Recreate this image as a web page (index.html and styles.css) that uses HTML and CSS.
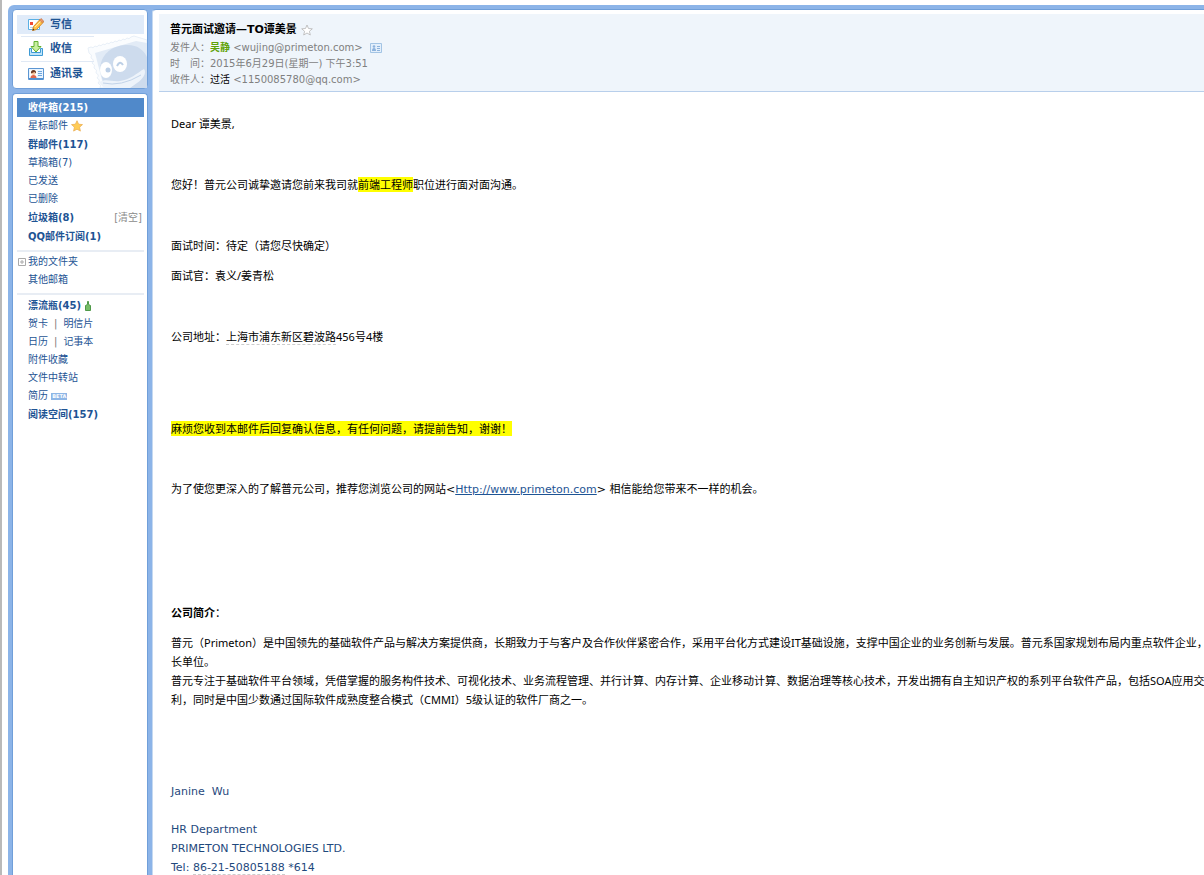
FILE: index.html
```html
<!DOCTYPE html>
<html lang="zh-CN">
<head>
<meta charset="utf-8">
<title>QQ邮箱</title>
<link rel="stylesheet" href="styles.css">
</head>
<body>
<div class="frame">
  <aside class="sidebar">
    <nav class="card actions">
      <svg class="mascot" viewBox="0 0 60 53" aria-hidden="true">
        <path d="M1 13 L4 12 Q6 14 8 11 Q10 13 12 10 Q14 12 16 9 Q18 11 20 8 Q22 10 24 7 Q26 9 28 6 Q30 8 32 5 Q34 7 36 4 Q38 6 40 3 Q42 5 44 2 L47 1 L60 5 V53 H13 Q15 50 11 48 Q14 45 10 43 Q13 40 9 38 Q11 35 7 33 Q9 30 5 28 Q8 25 4 23 Q6 20 2 18Z" fill="#fafcfe" stroke="#e9f0f8"/>
        <path d="M8 18 L49 6 L60 8 V53 H17Z" fill="#e2ebf6"/>
        <path d="M13 36 C13 20 24 11 38 10 C50 9 57 15 60 22 V53 H18Z" fill="#cddbed"/>
        <path d="M12 47 C20 43 24 47 33 46 C43 45 50 38 57 34 C60 38 56 44 50 48 L43 53 H17Z" fill="#edf3fa"/>
        <path d="M16 48 Q34 52 54 40" fill="none" stroke="#c3d4e9"/>
        <ellipse cx="19" cy="35" rx="6" ry="8" fill="#fff"/><ellipse cx="33" cy="29" rx="7" ry="8" fill="#fff"/>
        <circle cx="21" cy="35" r="2.500" fill="#bccfe6"/><path d="M30 31q3-6 6-1" fill="none" stroke="#bccfe6" stroke-width="2"/>
      </svg>
      <a class="action current" href="#compose">
        <svg viewBox="0 0 16 16" aria-hidden="true"><path d="M.5 2.500h11v10H.5z" fill="#fff" stroke="#5bb0e4"/><path d="M2 5h3v3H2z" fill="#f04a35"/><path d="M2 10.500h4" stroke="#b9d6ef"/><path d="M4.500 13.500l1-4 7-7.500 3 3-7 7.500z" fill="#ffc54a" stroke="#d78a2a"/><path d="M7 10l6-6" stroke="#ffe9a8"/><path d="M11.500 3l1.500-1.500 2.700 2.500-1.500 1.600z" fill="#ef9c6a" stroke="#b9633a" stroke-width=".6"/><path d="M4.500 13.500l.6-2 1.400 1.500z" fill="#333"/></svg>写信</a>
      <a class="action" href="#receive">
        <svg viewBox="0 0 16 16" aria-hidden="true"><path d="M1.500 7.500v7h13v-7h-2v4h-9v-4z" fill="#bfe4fa" stroke="#3d9ad4"/><path d="M6 .5h4v5h3L8 11 3 5.500h3z" fill="#c9efa0" stroke="#62b030"/></svg>收信</a>
      <a class="action" href="#contacts">
        <svg viewBox="0 0 16 16" aria-hidden="true"><path d="M.5 2.500h15v11H.5z" fill="#e9f4ff" stroke="#5c96d2"/><path d="M1 12h14v1.500H1z" fill="#4f8fd0"/><path d="M2 4h7v8H2z" fill="#fff"/><circle cx="5.500" cy="7" r="2" fill="#f9c39a"/><path d="M3 7.500q-.5-3.500 2.500-3.500 3 0 2.500 3.500L6.500 6z" fill="#6e3a22"/><path d="M2.500 12q0-3 3-3t3 3z" fill="#e0664c"/><path d="M10 5.500h4M10 7.500h4M10 9.500h4" stroke="#6ea5dc"/></svg>通讯录</a>
    </nav>
    <nav class="card folders">
      <ul class="group">
        <li class="unread"><a class="selected" href="#inbox">收件箱(215)</a></li>
        <li><a href="#star">星标邮件 <svg class="star" viewBox="0 0 12 12" aria-hidden="true"><path d="M6 .7l1.600 3.500 3.900.4-2.900 2.600.8 3.900L6 9.200l-3.400 1.900.8-3.900L.5 4.600l3.900-.4z" fill="#ffcc55" stroke="#e9a94a" stroke-width=".7"/></svg></a></li>
        <li class="unread"><a href="#group">群邮件(117)</a></li>
        <li><a href="#draft">草稿箱(7)</a></li>
        <li><a href="#sent">已发送</a></li>
        <li><a href="#deleted">已删除</a></li>
        <li class="unread split"><a href="#junk">垃圾箱(8)</a><a class="clear" href="#clear">[清空]</a></li>
        <li class="unread"><a href="#subscribe">QQ邮件订阅(1)</a></li>
      </ul>
      <ul class="group">
        <li class="tree"><svg class="plus" viewBox="0 0 8 8" aria-hidden="true"><path d="M.5.5h7v7h-7zM2 4h4M4 2v4" fill="none" stroke="#aaa"/></svg><a href="#folders">我的文件夹</a></li>
        <li><a href="#other">其他邮箱</a></li>
      </ul>
      <ul class="group">
        <li class="unread"><a href="#bottle">漂流瓶(45) <svg class="bottle" viewBox="0 0 6 10" aria-hidden="true"><path d="M2.500.5h1v3l2 1v5h-5v-5l2-1z" fill="#76bd67" stroke="#4f9948"/></svg></a></li>
        <li><a href="#card">贺卡</a><span class="bar">|</span><a href="#postcard">明信片</a></li>
        <li><a href="#calendar">日历</a><span class="bar">|</span><a href="#notes">记事本</a></li>
        <li><a href="#attach">附件收藏</a></li>
        <li><a href="#transfer">文件中转站</a></li>
        <li><a href="#resume">简历 <span class="beta">BETA</span></a></li>
        <li class="unread"><a href="#reading">阅读空间(157)</a></li>
      </ul>
    </nav>
  </aside>
  <main class="mail">
    <header class="head">
      <h1 class="subject">普元面试邀请—TO谭美景 <svg class="flag" viewBox="0 0 12 12" aria-hidden="true"><path d="M6 1l1.500 3.500 3.800.3-2.900 2.500.9 3.700L6 9l-3.300 2 .9-3.700L.7 4.800l3.800-.3z" fill="#fff" stroke="#b5b5b5" stroke-width=".8"/></svg></h1>
      <p class="meta">发件人：<b class="sender">吴静</b> &lt;wujing@primeton.com&gt; <svg class="vcard" viewBox="0 0 12 10" aria-hidden="true"><path d="M.5.5h11v9H.5z" fill="#e3effb" stroke="#a3c4e4"/><circle cx="4" cy="3.500" r="1.300" fill="#8cb2dc"/><path d="M2 8q0-3 2-3t2 3zM7 3h3v1H7zM7 5h3v1H7zM7 7h3v1H7z" fill="#8cb2dc"/></svg></p>
      <p class="meta">时&emsp;间：2015年6月29日(星期一) 下午3:51</p>
      <p class="meta">收件人：<span class="receiver">过活</span> &lt;1150085780@qq.com&gt;</p>
    </header>
    <article class="body">
      <p>Dear 谭美景,</p>
      <p class="blank">&nbsp;</p>
      <p>您好！普元公司诚挚邀请您前来我司就<mark>前端工程师</mark>职位进行面对面沟通。</p>
      <p class="blank">&nbsp;</p>
      <p>面试时间：待定（请您尽快确定）</p>
      <p>面试官：袁义/姜青松</p>
      <p class="blank">&nbsp;</p>
      <p>公司地址：<span class="place">上海市浦东新区碧波路</span>456号4楼</p>
      <p class="blank">&nbsp;</p>
      <p class="blank">&nbsp;</p>
      <p><mark>麻烦您收到本邮件后回复确认信息，有任何问题，请提前告知，谢谢！</mark></p>
      <p class="blank">&nbsp;</p>
      <p class="wide">为了使您更深入的了解普元公司，推荐您浏览公司的网站&lt;<a href="#site">Http://www.primeton.com</a>&gt; 相信能给您带来不一样的机会。</p>
      <p class="blank">&nbsp;</p>
      <p class="blank">&nbsp;</p>
      <p class="blank">&nbsp;</p>
      <p><b>公司简介</b>：</p>
      <div class="intro">普元（Primeton）是中国领先的基础软件产品与解决方案提供商，长期致力于与客户及合作伙伴紧密合作，采用平台化方式建设IT基础设施，支撑中国企业的业务创新与发展。普元系国家规划布局内重点软件企业，并是国际<br>长单位。<br>普元专注于基础软件平台领域，凭借掌握的服务构件技术、可视化技术、业务流程管理、并行计算、内存计算、企业移动计算、数据治理等核心技术，开发出拥有自主知识产权的系列平台软件产品，包括SOA应用交付平台、<br>利，同时是中国少数通过国际软件成熟度整合模式（CMMI）5级认证的软件厂商之一。</div>
      <address class="sign">Janine&nbsp; Wu<br><br>HR Department<br>PRIMETON TECHNOLOGIES LTD.<br>Tel: <span class="place">86-21-50805188</span> *614</address>
    </article>
  </main>
</div>
</body>
</html>
```
FILE: styles.css
```css
* { box-sizing: border-box; }
html { height: 100%; }
body {
  height: 100%;
  margin: 0;
  padding: 5px 0 0 6px;
  border-left: 2px solid #b9b9b9;
  overflow: hidden;
  background: #fff;
  font: 10px/18px "DejaVu Sans", "Noto Sans CJK SC", sans-serif;
}
a { color: #1e5494; text-decoration: none; }
ul, p, h1 { margin: 0; padding: 0; list-style: none; }
.frame {
  display: flex;
  gap: 4px;
  height: 100%;
  padding: 4px 0 0 4px;
  background: #8cb4e8;
  border-top-left-radius: 6px;
}
.sidebar { display: flex; flex-direction: column; gap: 4px; width: 136px; flex: none; }
.card { padding: 4px 3px 4px 4px; background: #fff; border: 1px solid #709fd9; border-radius: 4px; white-space: nowrap; }
.actions { position: relative; height: 80px; padding-top: 5px; }
.mascot { position: absolute; right: 0; bottom: 0; width: 60px; height: 53px; }
.action {
  position: relative;
  display: flex;
  align-items: center;
  gap: 6px;
  height: 25px;
  padding-left: 11px;
  font-size: 11px;
  font-weight: bold;
}
.action svg { width: 16px; height: 16px; }
.action.current { height: 19px; background: #e0ebf9; }
.action + .action::before { content: ""; position: absolute; top: 0; left: 4px; right: 50px; border-top: 1px solid #e0e9f5; }
.action.current + .action { margin-top: 2px; }
.folders { flex: 1; border-bottom: 0; border-radius: 4px 4px 0 0; }
.group + .group { margin-top: 4px; padding-top: 1px; border-top: 2px solid #e8edf4; }
.group li { height: 18px; padding-left: 11px; line-height: 18px; }
.group .unread { height: 19px; line-height: 19px; font-weight: bold; }
.selected { display: block; margin-left: -11px; padding-left: 11px; background: #5089ca; color: #fff; }
.split { display: flex; justify-content: space-between; padding-right: 2px; }
.clear { color: #8c8c8c; font-weight: normal; }
.group .tree { display: flex; align-items: center; gap: 2px; padding-left: 1px; }
.plus { width: 8px; height: 8px; }
.star { width: 12px; height: 12px; vertical-align: middle; }
.bottle { width: 6px; height: 10px; vertical-align: middle; }
.beta {
  display: inline-block;
  padding: 0 1px;
  background: #8eb6e6;
  color: #fff;
  font: bold 5px/7px "DejaVu Sans", sans-serif;
  vertical-align: middle;
}
.bar { margin: 0 6px; color: #777; }
.mail {
  flex: 1;
  min-width: 0;
  padding: 4px 0 0 6px;
  overflow: hidden;
  background: #fff;
  border: solid;
  border-width: 1px 0 0 1px;
  border-color: #709fd9 #c5d9f1;
  border-top-left-radius: 4px;
}
.head { padding: 7px 11px 3px; background: #eff5fb; border-bottom: 1px solid #b8cfeb; }
.subject { margin-bottom: 1px; color: #000; font-size: 11px; line-height: 18px; }
.flag { width: 12px; height: 12px; vertical-align: middle; }
.meta { color: #808080; line-height: 16px; }
.sender { color: #5fa207; }
.receiver { color: #000; }
.vcard { width: 12px; height: 10px; margin-left: 4px; vertical-align: middle; }
.body {
  padding: 22px 0 0 12px;
  color: #000;
  font: 11px/20px "Noto Sans", "Noto Sans CJK SC", sans-serif;
  white-space: nowrap;
}
.body p { height: 20px; margin-bottom: 10px; }
.body .blank { height: 21px; }
.body .wide { font-family: "DejaVu Sans", "Noto Sans CJK SC", sans-serif; }
.body a { text-decoration: underline; }
mark { background: #ff0; color: #000; }
.place { border-bottom: 1px dashed #ccc; }
.intro { line-height: 19px; }
.sign { margin-top: 73px; color: #1f497d; font: 11px/19px "DejaVu Sans", sans-serif; }
```
